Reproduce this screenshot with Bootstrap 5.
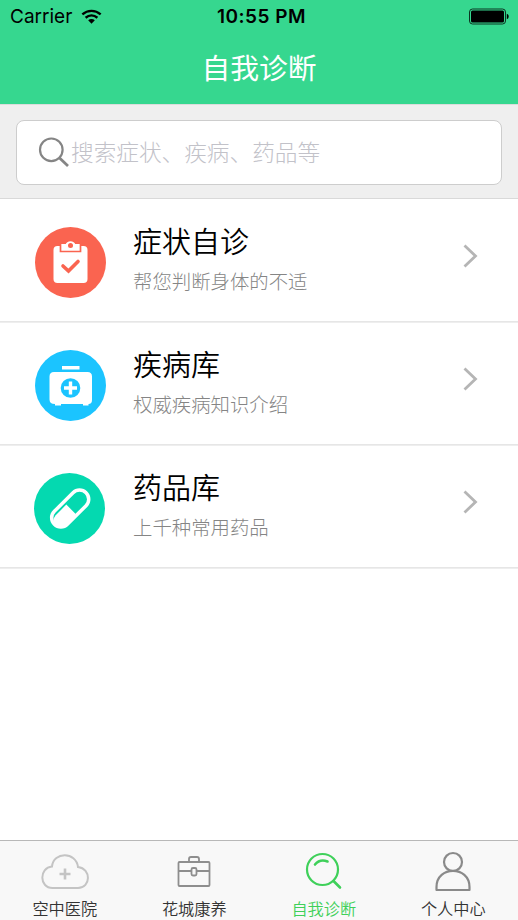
<!DOCTYPE html>
<html lang="zh-CN">
<head>
<meta charset="utf-8">
<meta name="viewport" content="width=device-width, initial-scale=1">
<title>自我诊断</title>
<link href="https://cdn.jsdelivr.net/npm/bootstrap@5.3.0/dist/css/bootstrap.min.css" rel="stylesheet">
<style>
body{font-family:"Noto Sans CJK SC",sans-serif;font-weight:350;color:#000;background:#fff;height:920px;overflow:hidden}
svg{display:block;flex:none}
.app-head{height:104px;background:#36d78f}
.status{height:33px;padding:0 9px 0 10px;font-family:Inter,sans-serif;font-size:19px;line-height:33px}
.status > *{flex:1 1 0}
.carrier{font-weight:400;letter-spacing:0;margin-right:9px}
.clock{font-weight:600;letter-spacing:.5px;padding-left:4px}
.page-title{font-size:28.8px;line-height:68px;color:#fff;font-weight:400}
.search-area{height:95px;padding:15px 16px 13px;background:#efefef;border-top:1px solid #dcdcdc;border-bottom:1px solid #d9d9d9}
.search-box{height:65px;border:1px solid #cdcdcd;border-radius:8px;padding-left:21px;background:#fff}
.search-box input{font-size:22.65px;padding:0 0 2px 1px;font-weight:300}
.search-box input::placeholder{color:#c2c2c9;opacity:1}
.entry{height:123px;padding:0 40px 0 35px}
.entry{box-shadow:inset 0 -1px #e6e6e6,0 1px #eee}
.entry-icon{margin-top:3px}
.entry-text{margin-left:27px;margin-top:-7px}
.entry-name{font-size:29px;line-height:42px;height:42px}
.entry-sub{font-size:19.4px;line-height:30px;color:#858585;margin-top:5px;font-weight:300}
.chev{margin-top:-9px}
.tabs{height:80px;background:#f8f8f8;border-top:1px solid #b8b8b8;font-size:16.2px;color:#333}
.tab{line-height:22px;padding-top:6px;text-decoration:none;color:inherit}
.tab.on{color:#3fd05a}
</style>
<script src="https://cdn.jsdelivr.net/npm/bootstrap@5.3.0/dist/js/bootstrap.bundle.min.js"></script>
</head>
<body class="d-flex flex-column">
<header class="app-head">
  <div class="status d-flex align-items-center">
    <div class="d-flex align-items-center">
      <span class="carrier">Carrier</span>
      <svg width="21" height="16" viewBox="0 0 22 16" fill="none" stroke="#000" stroke-width="2.500"><path d="M1.400 5.300C7 .4 15 .4 20.600 5.300M4.800 8.800C8.500 5.700 13.500 5.700 17.200 8.800"/><path d="M11 15L7.500 11.500C9.500 9.800 12.500 9.800 14.500 11.500Z" fill="#000" stroke="none"/></svg>
    </div>
    <div class="clock text-center text-nowrap">10:55 PM</div>
    <div class="d-flex justify-content-end">
      <svg width="41" height="17" viewBox="0 0 41 17"><rect x="1.500" y="1" width="36" height="15" rx="3" fill="none" stroke="#0c3422"/><rect x="3" y="2.500" width="33" height="12" rx="1.500"/><path d="M38.800 5.800C41.300 6.500 41.300 10.500 38.800 11.200Z"/></svg>
    </div>
  </div>
  <h1 class="page-title text-center m-0">自我诊断</h1>
</header>

<div class="search-area">
  <div class="search-box d-flex align-items-center">
    <svg width="32" height="32" viewBox="0 0 32 32" fill="none" stroke="#858585" stroke-width="2.200"><circle cx="13.300" cy="12.800" r="11.300"/><path d="M21.300 20.800L30 29" stroke-width="2.800"/></svg>
    <input class="form-control border-0 shadow-none bg-transparent" type="text" placeholder="搜索症状、疾病、药品等">
  </div>
</div>

<main class="flex-grow-1">
  <div class="entry d-flex align-items-center">
    <svg class="entry-icon" width="71" height="71" viewBox="0 0 71 71"><circle cx="35.500" cy="35.500" r="35.500" fill="#fa6450"/><rect x="18.500" y="19" width="34" height="37" rx="4" fill="#fff"/><path d="M25.500 17V24.500H45.500V17" fill="#fff" stroke="#fa6450" stroke-width="1.700"/><path d="M27 23V19.500Q27 18 29 18H30.500C31.500 13 39.500 13 40.500 18H42Q44 18 44 19.500V23Z" fill="#fff"/><circle cx="35.500" cy="18.500" r="2.500" fill="#fa6450"/><path d="M28 39L33.500 44L43 34.500" fill="none" stroke="#fa6450" stroke-width="3.600" stroke-linecap="round"/></svg>
    <div class="entry-text flex-grow-1"><div class="entry-name">症状自诊</div><div class="entry-sub">帮您判断身体的不适</div></div>
    <svg class="chev" width="15" height="24" viewBox="0 0 15 24" fill="none" stroke="#b5b5b5" stroke-width="2.800"><path d="M1.500 1.500L12.500 12L1.500 22.500"/></svg>
  </div>
  <div class="entry d-flex align-items-center">
    <svg class="entry-icon" width="71" height="71" viewBox="0 0 71 71"><circle cx="35.500" cy="35.500" r="35.500" fill="#1bc4ff"/><path d="M27 16H44.500V19.500H27ZM19 22H52.500Q57 22 57 26.500V50Q57 54 53.500 54V55.500H48V54H26V55.500H20V54Q14.500 54 14.500 49.500V26.500Q14.500 22 19 22Z" fill="#fff"/><circle cx="35.500" cy="38" r="9.800" fill="#1bc4ff"/><path d="M35.500 31.500V44.500M29 38H42" stroke="#fff" stroke-width="3.400"/></svg>
    <div class="entry-text flex-grow-1"><div class="entry-name">疾病库</div><div class="entry-sub">权威疾病知识介绍</div></div>
    <svg class="chev" width="15" height="24" viewBox="0 0 15 24" fill="none" stroke="#b5b5b5" stroke-width="2.800"><path d="M1.500 1.500L12.500 12L1.500 22.500"/></svg>
  </div>
  <div class="entry d-flex align-items-center">
    <svg class="entry-icon" width="71" height="71" viewBox="0 0 71 71" overflow="visible"><circle cx="34.500" cy="35.500" r="35.500" fill="#04d9b0"/><g transform="translate(35.200 35.500) rotate(-45)"><path d="M0 -5.500H-15Q-18.500 -5.500 -21.500 -2A9.200 9.200 0 0 0 -13.200 9.200H0Z" fill="#fff"/><rect x="-22.400" y="-9.200" width="44.800" height="18.400" rx="9.200" fill="none" stroke="#fff" stroke-width="3.500"/></g></svg>
    <div class="entry-text flex-grow-1"><div class="entry-name">药品库</div><div class="entry-sub">上千种常用药品</div></div>
    <svg class="chev" width="15" height="24" viewBox="0 0 15 24" fill="none" stroke="#b5b5b5" stroke-width="2.800"><path d="M1.500 1.500L12.500 12L1.500 22.500"/></svg>
  </div>
</main>

<nav class="tabs row g-0">
  <a class="tab col d-flex flex-column align-items-center" href="#"><svg width="50" height="50" viewBox="0 0 50 50" fill="none" stroke="#c4c4c4" stroke-width="2"><path d="M12.500 41C-1 41-1 20.500 12 19.500C13.500 4.500 36 4.500 38 20C51.500 21.500 51 41 38 41Z"/><path d="M25 21.500V32.500M19.500 27H30.500" stroke-width="2.600"/></svg><span>空中医院</span></a>
  <a class="tab col d-flex flex-column align-items-center" href="#"><svg width="50" height="50" viewBox="0 0 50 50" fill="none" stroke="#8e8e8e" stroke-width="1.800"><rect x="9.500" y="15" width="31" height="24" rx="1"/><path d="M20 15V12Q20 10 22 10H28Q30 10 30 12V15M9.500 24H22.500M27.500 24H40.500"/><rect x="22.500" y="21" width="5" height="7.500" rx="1.500"/></svg><span>花城康养</span></a>
  <a class="tab on col d-flex flex-column align-items-center" href="#"><svg width="50" height="50" viewBox="0 0 50 50" fill="none" stroke="#3fd05a" stroke-width="2.200" stroke-linecap="round"><circle cx="23.500" cy="22.500" r="15.500"/><path d="M16 17.500Q21 11.500 28.500 14.500M34.500 34L41 40.500" stroke-width="2.600"/></svg><span>自我诊断</span></a>
  <a class="tab col d-flex flex-column align-items-center" href="#"><svg width="50" height="50" viewBox="0 0 50 50" fill="none" stroke="#8a8a8a" stroke-width="2.200"><circle cx="25" cy="15" r="9"/><path d="M8.500 43V40C8.500 18.500 41.500 18.500 41.500 40V43Z" stroke-linejoin="round"/></svg><span>个人中心</span></a>
</nav>
</body>
</html>
